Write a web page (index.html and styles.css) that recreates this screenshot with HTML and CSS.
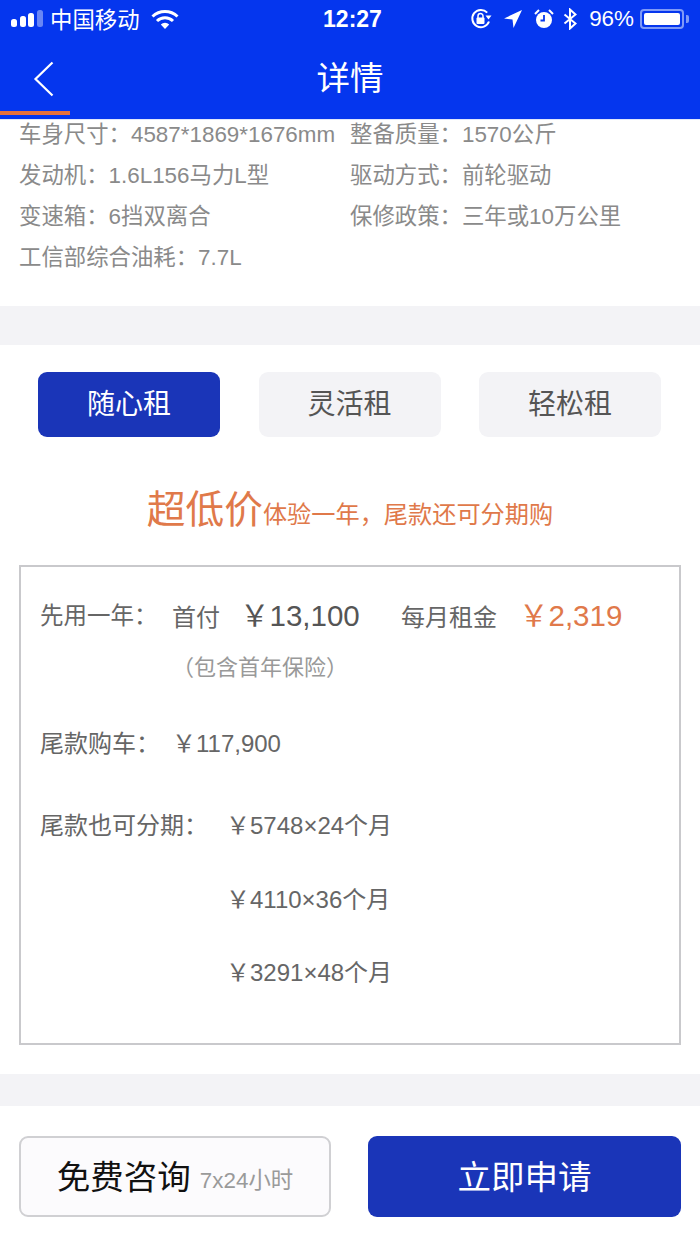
FILE: index.html
```html
<!DOCTYPE html>
<html lang="zh">
<head>
<meta charset="utf-8">
<title>详情</title>
<link rel="stylesheet" href="styles.css">
</head>
<body>
<header class="header">
  <div class="status">
    <div class="status-left">
      <svg class="signal" width="32" height="20" viewBox="0 0 32 20"><rect x="0" y="10" width="6" height="8" rx="2.5" fill="#fff"/><rect x="9" y="7" width="6" height="11" rx="2.5" fill="#fff"/><rect x="17" y="4" width="6" height="14" rx="2.5" fill="#fff"/><rect x="26" y="1" width="6" height="17" rx="2.5" fill="#fff" opacity=".4"/></svg>
      <span class="carrier">中国移动</span>
      <svg class="wifi" width="28" height="20" viewBox="0 0 28 20"><path d="M1.500 7.500a18 18 0 0 1 25 0" fill="none" stroke="#fff" stroke-width="3"/><path d="M6 12a11.500 11.500 0 0 1 16 0" fill="none" stroke="#fff" stroke-width="3"/><path d="M9.800 15.500a6 6 0 0 1 8.400 0L14 20z" fill="#fff"/></svg>
    </div>
    <span class="time">12:27</span>
    <div class="status-right">
      <svg width="22" height="22" viewBox="0 0 22 22"><path d="M19 13.500A8.600 8.600 0 1 1 17.200 4.600" fill="none" stroke="#fff" stroke-width="2"/><path d="M15.500 7.500h6l-3 4z" fill="#fff"/><rect x="6.500" y="9.500" width="8" height="6.500" rx="1" fill="#fff"/><path d="M8 10V8a2.500 2.500 0 0 1 5 0v2" fill="none" stroke="#fff" stroke-width="1.500"/></svg>
      <svg class="gap-l" width="20" height="20" viewBox="0 0 20 20"><path d="M19 1L1 9.500l8.500 1 1 8.500z" fill="#fff"/></svg>
      <svg class="gap-l" width="20" height="20" viewBox="0 0 20 20"><circle cx="10" cy="11" r="8" fill="#fff"/><path d="M10 6v5.500H6.500" fill="none" stroke="#0536ee" stroke-width="1.800"/><path d="M1 5l4-4M19 5l-4-4" stroke="#fff" stroke-width="2"/></svg>
      <svg class="gap-s" width="14" height="22" viewBox="0 0 14 22"><path d="M1.500 6.500l11 9-5.500 5V1.500l5.500 5-11 9" fill="none" stroke="#fff" stroke-width="2"/></svg>
      <span class="percent">96%</span>
      <span class="battery"><span class="battery-fill"></span></span>
      <span class="battery-tip"></span>
    </div>
  </div>
  <div class="nav">
    <svg class="back" width="22" height="36" viewBox="0 0 22 36"><path d="M19.500 1.500L2.500 18l17 16.500" fill="none" stroke="#fff" stroke-width="2.200"/></svg>
    <h1 class="title">详情</h1>
  </div>
  <div class="progress"></div>
</header>

<section class="specs">
  <p>车身尺寸：4587*1869*1676mm</p>
  <p>整备质量：1570公斤</p>
  <p>发动机：1.6L156马力L型</p>
  <p>驱动方式：前轮驱动</p>
  <p>变速箱：6挡双离合</p>
  <p>保修政策：三年或10万公里</p>
  <p>工信部综合油耗：7.7L</p>
</section>

<div class="band band-one"></div>

<section class="plans">
  <div class="tabs">
    <div class="tab tab-active">随心租</div>
    <div class="tab">灵活租</div>
    <div class="tab">轻松租</div>
  </div>
  <h2 class="slogan"><span class="slogan-big">超低价</span>体验一年，尾款还可分期购</h2>
  <div class="box">
    <div class="line-first">
      <span class="label-first">先用一年：</span>
      <span class="pay-label">首付</span>
      <span class="amount">￥13,100</span>
      <span class="rent-label">每月租金</span>
      <span class="amount amount-hot">￥2,319</span>
    </div>
    <div class="note">（包含首年保险）</div>
    <div class="line-final">
      <span class="label-final">尾款购车：</span>
      <span>￥117,900</span>
    </div>
    <div class="instalments">
      <span class="label-inst">尾款也可分期：</span>
      <div class="inst-list">
        <div>￥5748×24个月</div>
        <div>￥4110×36个月</div>
        <div>￥3291×48个月</div>
      </div>
    </div>
  </div>
</section>

<div class="band band-two"></div>

<footer class="actions">
  <button class="btn btn-ghost">免费咨询<small class="btn-note">7x24小时</small></button>
  <button class="btn btn-primary">立即申请</button>
</footer>
</body>
</html>
```
FILE: styles.css
```css
* { box-sizing: border-box; }
html, body { margin: 0; padding: 0; }
body {
  width: 700px;
  height: 1245px;
  overflow: hidden;
  background: #fff;
  font-family: "Liberation Sans", "Noto Sans CJK SC", sans-serif;
  color: #666;
}
.header { background: #0536ee; height: 120px; color: #fff; display: flex; flex-direction: column; border-bottom: 1px solid #dfe6fb; }
.status { height: 38px; display: flex; align-items: center; justify-content: space-between; padding: 0 11px 0 11px; position: relative; }
.status-left, .status-right { display: flex; align-items: center; }
.signal { margin-right: 7px; }
.carrier { font-size: 22.400px; margin-bottom: 3px; }
.wifi { margin-left: 11px; }
.time { position: absolute; left: 5px; right: 0; text-align: center; font-size: 23px; font-weight: 700; }
.gap-l { margin-left: 11px; }
.gap-s { margin-left: 9px; }
.percent { font-size: 22.400px; margin-left: 12px; }
.battery { width: 44px; height: 20px; margin-left: 6px; border: 2px solid #7f9af7; border-radius: 4px; padding: 2px; display: flex; }
.battery-fill { flex: 1; background: #fff; border-radius: 2px; }
.battery-tip { width: 3px; height: 8px; margin-left: 2px; background: #7f9af7; border-radius: 0 2px 2px 0; }
.nav { height: 77px; flex: none; display: flex; align-items: center; justify-content: center; position: relative; padding-top: 4px; }
.back { position: absolute; left: 33px; top: 23px; }
.title { margin: 0; font-size: 33.500px; font-weight: 400; line-height: 73px; }
.progress { width: 70px; height: 4px; background: #e8703a; flex: none; transform: translateY(-4px); }

.specs { display: grid; grid-template-columns: 331px 1fr; grid-auto-rows: 41px; padding: 0 0 0 19px; height: 192px; color: #8a8a8a; font-size: 22.400px; margin-top: -6px; }
.specs p { margin: 0; line-height: 41px; white-space: nowrap; }

.band { background: #f3f3f6; }
.band-one { height: 39px; }
.band-two { height: 32px; }

.plans { height: 729px; padding-top: 27px; }
.tabs { display: flex; justify-content: space-between; padding: 0 39px 0 38px; }
.tab { width: 182px; height: 65px; border-radius: 9px; background: #f3f3f6; color: #555; font-size: 28px; line-height: 65px; text-align: center; }
.tab-active { background: #1a35b8; color: #fff; }
.slogan { margin: 50px 0 0; height: 46px; line-height: 46px; font-size: 24.200px; font-weight: 400; color: #e0794a; text-align: center; white-space: nowrap; }
.slogan-big { font-size: 38.700px; }
.box { margin: 32px 19px 0; height: 480px; border: 2px solid #c9c9cc; padding: 0 0 0 19px; font-size: 24px; color: #666; }
.line-first { display: flex; align-items: baseline; height: 98px; line-height: 98px; white-space: nowrap; }
.label-first { width: 132px; font-size: 23.500px; align-self: flex-start; line-height: 98px; }
.pay-label { width: 68px; }
.amount { font-size: 29.500px; width: 161px; color: #555; }
.rent-label { width: 118px; }
.amount-hot { color: #e0794a; width: auto; }
.note { margin-top: -12px; padding-left: 132px; color: #999; font-size: 22px; line-height: 30px; }
.line-final { margin-top: 46px; display: flex; line-height: 30px; }
.label-final { width: 132px; }
.instalments { margin-top: 52px; display: flex; }
.label-inst { width: 186px; line-height: 30px; }
.inst-list { display: flex; flex-direction: column; gap: 43.500px; line-height: 30px; }

.actions { display: flex; justify-content: space-between; padding: 30px 19px 0; }
.btn { height: 81px; border-radius: 9px; font-family: inherit; font-size: 33.500px; display: flex; align-items: center; justify-content: center; padding-bottom: 5px; }
.btn-ghost { width: 312px; background: #fcfbfd; border: 2px solid #d0d0d3; color: #111; padding-right: 6px; }
.btn-note { font-size: 22.400px; color: #9a9a9a; margin-left: 9px; margin-top: 6px; }
.btn-primary { width: 313px; background: #1a35b8; border: 0; color: #fff; }
```
